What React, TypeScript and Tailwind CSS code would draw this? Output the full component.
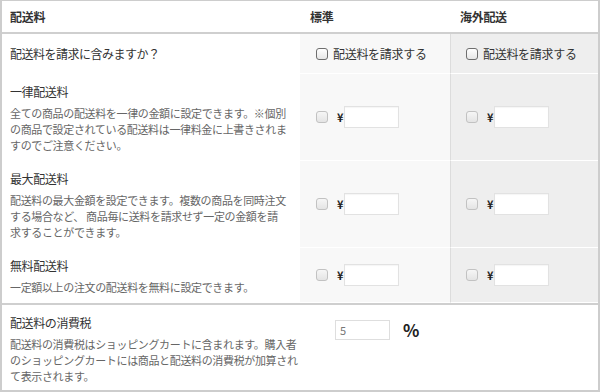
import type { ReactNode } from "react";

interface FeeRow {
  title: string;
  lines: string[];
  height: string;
}

const feeRows: FeeRow[] = [
  {
    title: "一律配送料",
    lines: [
      "全ての商品の配送料を一律の金額に設定できます。※個別",
      "の商品で設定されている配送料は一律料金に上書きされま",
      "すのでご注意ください。",
    ],
    height: "h-[87px]",
  },
  {
    title: "最大配送料",
    lines: [
      "配送料の最大金額を設定できます。複数の商品を同時注文",
      "する場合など、 商品毎に送料を請求せず一定の金額を請",
      "求することができます。",
    ],
    height: "h-[87px]",
  },
  {
    title: "無料配送料",
    lines: ["一定額以上の注文の配送料を無料に設定できます。"],
    height: "h-[55px]",
  },
];

function Checkbox({ active = false }: { active?: boolean }) {
  return (
    <span
      className={
        active
          ? "inline-block size-[12px] shrink-0 rounded-[3px] border border-[#6e6e6e] bg-linear-to-b from-white to-[#e6e6e6]"
          : "inline-block size-[12px] shrink-0 rounded-[3px] border border-[#c2c2c2] bg-linear-to-b from-[#f6f6f6] to-[#e4e4e4]"
      }
    />
  );
}

function PriceField({ inset }: { inset: string }) {
  return (
    <div className={`flex items-center ${inset}`}>
      <Checkbox />
      <span className="ml-[9px] text-[11px] font-bold leading-none text-[#222]">¥</span>
      <span className="h-[22px] w-[55px] border border-[#e2e2e2] bg-white shadow-[inset_0_1px_1px_rgba(0,0,0,0.04)]" />
    </div>
  );
}

function Description({ title, lines }: { title: string; lines: string[] }) {
  return (
    <div className="flex flex-col pl-[8px]">
      <div className="text-[12px] leading-[18px] tracking-[-0.4px] text-[#333]">{title}</div>
      <div className="mt-[4px] text-[11px] leading-[16px] tracking-[-0.35px] text-[#666]">
        {lines.map((line) => (
          <span key={line} className="block whitespace-nowrap">
            {line}
          </span>
        ))}
      </div>
    </div>
  );
}

function Row({ height, left, standard, overseas }: { height: string; left: ReactNode; standard: ReactNode; overseas: ReactNode }) {
  return (
    <div className={`grid grid-cols-[298px_151px_1fr] ${height}`}>
      <div className="flex flex-col justify-center bg-white">{left}</div>
      <div className="flex items-center border-r border-b border-r-[#dcdcdc] border-b-white bg-[#f8f8f8]">{standard}</div>
      <div className="flex items-center border-b border-white bg-[#eeeeee]">{overseas}</div>
    </div>
  );
}

export default function App() {
  return (
    <div className="flex h-[392px] w-[600px] flex-col border-x-2 border-t border-b-2 border-[#cdcdcd] bg-white font-['Noto_Sans_CJK_JP','Noto_Sans',sans-serif] text-[#333]">
      <div className="grid h-[33px] shrink-0 grid-cols-[298px_151px_1fr] items-center border-b-2 border-[#cfcfcf] text-[12px] font-bold tracking-[-0.3px]">
        <div className="pl-[8px]">配送料</div>
        <div className="pl-[10px]">標準</div>
        <div className="pl-[9px]">海外配送</div>
      </div>

      <div className="shrink-0 border-b-2 border-[#cfcfcf]">
        <Row
          height="h-[40px]"
          left={<div className="pl-[8px] text-[12px] tracking-[-0.5px] text-[#333]">配送料を請求に含みますか？</div>}
          standard={
            <div className="flex items-center gap-[5px] pl-4 text-[12px] tracking-[-0.3px]">
              <Checkbox active />
              配送料を請求する
            </div>
          }
          overseas={
            <div className="flex items-center gap-[5px] pl-[15px] text-[12px] tracking-[-0.3px]">
              <Checkbox active />
              配送料を請求する
            </div>
          }
        />
        {feeRows.map((row) => (
          <Row
            key={row.title}
            height={row.height}
            left={<Description title={row.title} lines={row.lines} />}
            standard={<PriceField inset="pl-4" />}
            overseas={<PriceField inset="pl-[15px]" />}
          />
        ))}
      </div>

      <div className="grid flex-1 grid-cols-[298px_1fr]">
        <div className="pt-[9px]">
          <Description
            title="配送料の消費税"
            lines={[
              "配送料の消費税はショッピングカートに含まれます。購入者",
              "のショッピングカートには商品と配送料の消費税が加算され",
              "て表示されます。",
            ]}
          />
        </div>
        <div className="flex items-start pt-[15px] pl-[35px]">
          <div className="flex h-[20px] w-[55px] items-center border border-[#dedede] bg-white pl-[4px] text-[11px] text-[#777]">
            5
          </div>
          <span className="ml-[13px] text-[17px] leading-[20px] font-semibold text-[#222]">%</span>
        </div>
      </div>
    </div>
  );
}
